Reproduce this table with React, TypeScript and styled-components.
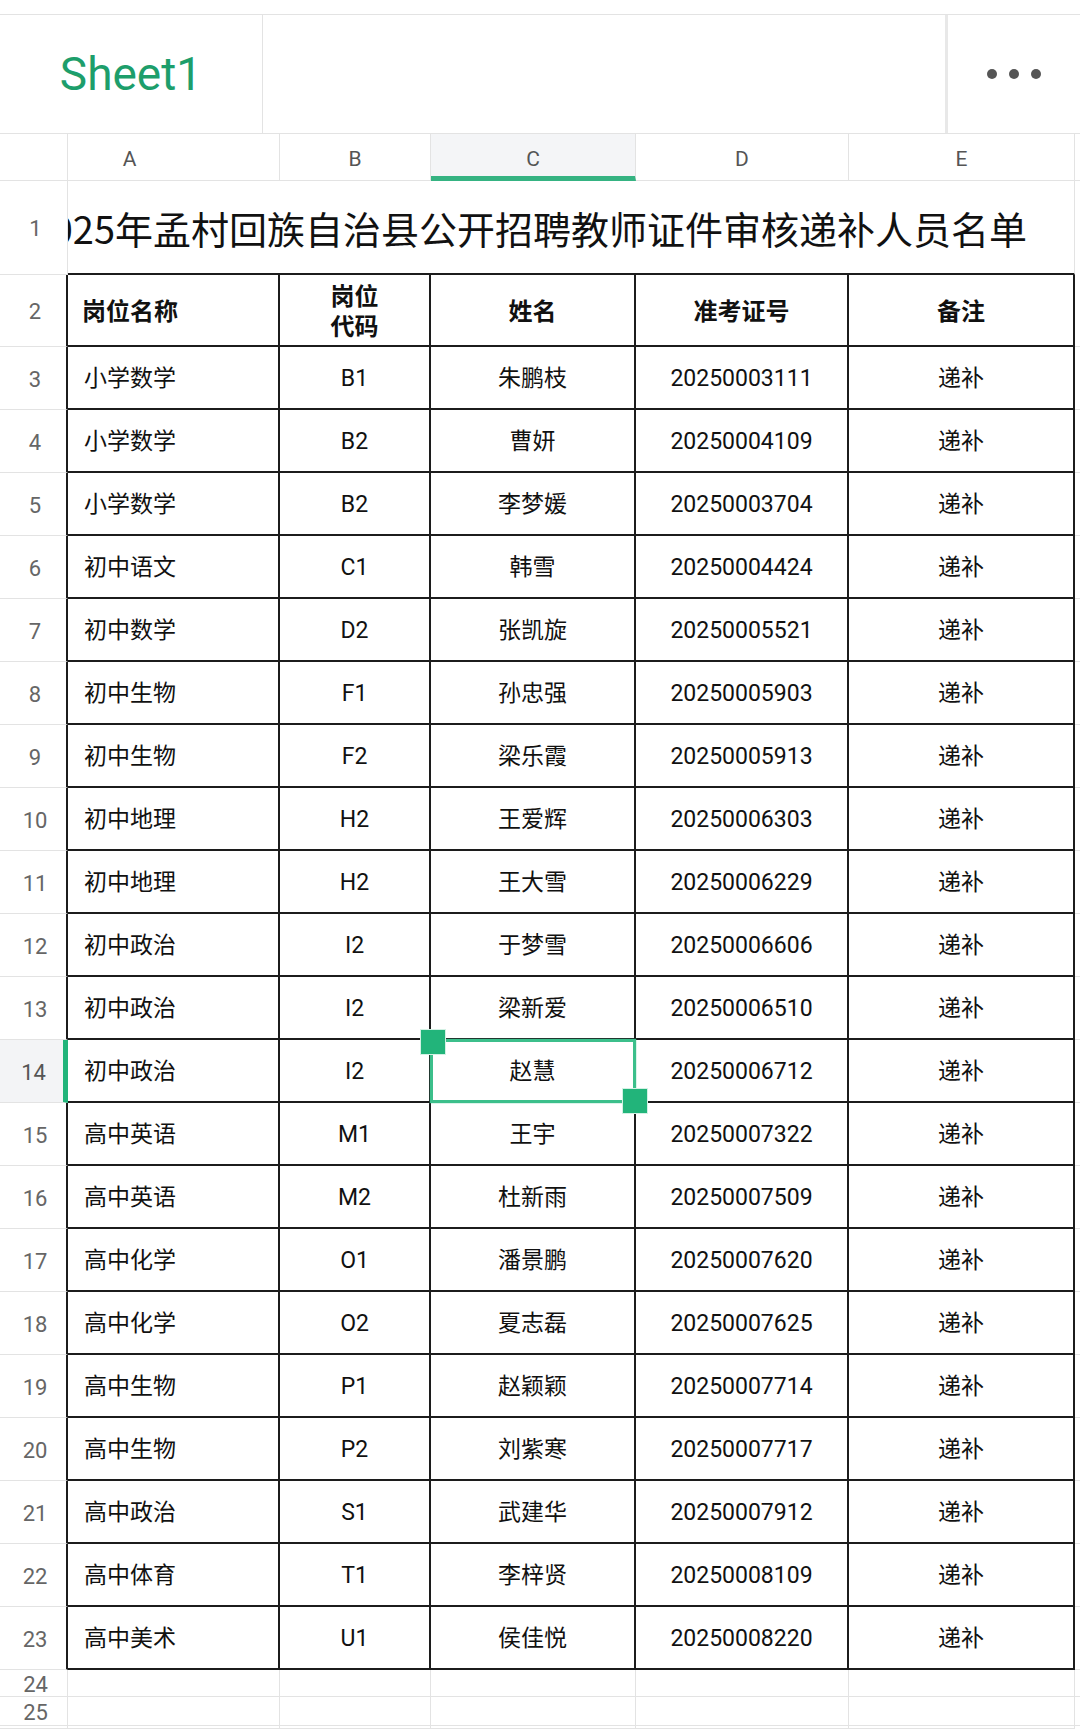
import React from "react";
import styled, { createGlobalStyle, css } from "styled-components";

const GREEN = "#22b47a";
const GRID = "#e3e3e3";
const INK = "#1c1c1c";

const GlobalStyle = createGlobalStyle`
  html, body { margin: 0; padding: 0; background: #fff; }
  body { font-family: Roboto, "Noto Sans CJK SC", sans-serif; overflow: hidden; }
  * { box-sizing: border-box; }
`;

const Page = styled.div`
  width: 1080px;
  height: 1729px;
  padding-top: 14px;
  display: flex;
  flex-direction: column;
  overflow: hidden;
  background: #fff;
`;

const TabBar = styled.div`
  flex: none;
  height: 120px;
  display: flex;
  border-top: 1px solid ${GRID};
  border-bottom: 1px solid ${GRID};
`;

const SheetTab = styled.div`
  width: 263px;
  display: flex;
  align-items: center;
  justify-content: center;
  border-right: 1px solid ${GRID};
  font-family: Roboto, sans-serif;
  font-size: 46px;
  color: #1d9e6b;
`;

const TabSpacer = styled.div`
  flex: 1;
`;

const MoreButton = styled.div`
  width: 135px;
  border-left: 3px solid #e8e8e8;
  display: flex;
  align-items: center;
  justify-content: center;
  gap: 12px;
`;

const Dot = styled.span`
  width: 10px;
  height: 10px;
  border-radius: 50%;
  background: #555;
`;

const Sheet = styled.div`
  flex: 1;
  display: grid;
  grid-template-columns: 68px 212px 151px 205px 213px 226px 5px;
  grid-template-rows: 47px 94px 72px repeat(21, 63px) 27px 29px 1fr;
`;

const Corner = styled.div`
  border-right: 1px solid ${GRID};
  border-bottom: 1px solid ${GRID};
`;

const ColHeader = styled.div<{ $active?: boolean; $shift?: number }>`
  display: flex;
  align-items: center;
  justify-content: center;
  padding-top: 3px;
  padding-right: ${(p) => p.$shift ?? 0}px;
  border-right: 1px solid ${GRID};
  border-bottom: 1px solid ${GRID};
  font-size: 21px;
  color: #555;
  ${(p) =>
    p.$active &&
    css`
      background: #f4f5f7;
      border-bottom: 5px solid #35b382;
      padding-top: 7px;
    `}
`;

type Edge = "grid" | "table" | "active";

const RowNum = styled.div<{ $edge: Edge }>`
  display: flex;
  align-items: center;
  justify-content: center;
  padding-left: 4px;
  padding-top: 2px;
  font-size: 22px;
  color: #666;
  border-bottom: 1px solid ${GRID};
  border-right: ${(p) =>
    p.$edge === "grid"
      ? `1px solid ${GRID}`
      : p.$edge === "table"
      ? `2px solid ${INK}`
      : `5px solid ${GREEN}`};
  ${(p) =>
    p.$edge === "active" &&
    css`
      background: #f3f4f6;
      color: #555;
    `}
`;

const TitleCell = styled.div`
  grid-column: span 5;
  display: flex;
  align-items: center;
  justify-content: flex-end;
  padding-right: 47px;
  overflow: hidden;
  border-right: 1px solid ${GRID};
  border-bottom: 2px solid ${INK};
`;

const Title = styled.span`
  flex: none;
  white-space: nowrap;
  font-family: "Noto Sans CJK SC", sans-serif;
  font-size: 38px;
  color: #111;
`;

const Cell = styled.div<{ $left?: boolean; $head?: boolean; $selected?: boolean }>`
  display: flex;
  flex-direction: column;
  align-items: ${(p) => (p.$left ? "flex-start" : "center")};
  justify-content: center;
  padding-left: ${(p) => (p.$left ? (p.$head ? "14px" : "16px") : "0")};
  padding-top: 3px;
  border-right: 2px solid ${INK};
  border-bottom: 2px solid ${INK};
  font-size: ${(p) => (p.$head ? "24px" : "23px")};
  font-weight: ${(p) => (p.$head ? 700 : 400)};
  line-height: 30px;
  color: #111;
  text-align: center;
  ${(p) =>
    p.$selected &&
    css`
      position: relative;
      z-index: 2;
    `}
`;

const Filler = styled.div<{ $bottom?: boolean }>`
  border-bottom: ${(p) => (p.$bottom ? `1px solid ${GRID}` : "none")};
`;

const EmptyCell = styled.div`
  border-right: 1px solid ${GRID};
  border-bottom: 1px solid ${GRID};
`;

const Selection = styled.div`
  position: absolute;
  left: -1px;
  top: -1px;
  right: -2px;
  bottom: -2px;
  border: 3px solid #3cbf8b;
  box-shadow: 0 0 0 1px rgba(60, 191, 139, 0.18);
  pointer-events: none;
`;

const Handle = styled.span<{ $pos: "tl" | "br" }>`
  position: absolute;
  width: 24px;
  height: 24px;
  background: ${GREEN};
  box-shadow: 0 0 0 1px #d3f1e4;
  ${(p) =>
    p.$pos === "tl"
      ? css`
          left: -12px;
          top: -12px;
        `
      : css`
          right: -14px;
          bottom: -13px;
        `}
`;

type Row = [string, string, string, string];

const data: Row[] = [
  ["小学数学", "B1", "朱鹏枝", "20250003111"],
  ["小学数学", "B2", "曹妍", "20250004109"],
  ["小学数学", "B2", "李梦媛", "20250003704"],
  ["初中语文", "C1", "韩雪", "20250004424"],
  ["初中数学", "D2", "张凯旋", "20250005521"],
  ["初中生物", "F1", "孙忠强", "20250005903"],
  ["初中生物", "F2", "梁乐霞", "20250005913"],
  ["初中地理", "H2", "王爱辉", "20250006303"],
  ["初中地理", "H2", "王大雪", "20250006229"],
  ["初中政治", "I2", "于梦雪", "20250006606"],
  ["初中政治", "I2", "梁新爱", "20250006510"],
  ["初中政治", "I2", "赵慧", "20250006712"],
  ["高中英语", "M1", "王宇", "20250007322"],
  ["高中英语", "M2", "杜新雨", "20250007509"],
  ["高中化学", "O1", "潘景鹏", "20250007620"],
  ["高中化学", "O2", "夏志磊", "20250007625"],
  ["高中生物", "P1", "赵颖颖", "20250007714"],
  ["高中生物", "P2", "刘紫寒", "20250007717"],
  ["高中政治", "S1", "武建华", "20250007912"],
  ["高中体育", "T1", "李梓贤", "20250008109"],
  ["高中美术", "U1", "侯佳悦", "20250008220"],
];

const SELECTED_ROW = 14;

export default function App() {
  return (
    <>
      <GlobalStyle />
      <Page>
        <TabBar>
          <SheetTab>Sheet1</SheetTab>
          <TabSpacer />
          <MoreButton>
            <Dot />
            <Dot />
            <Dot />
          </MoreButton>
        </TabBar>
        <Sheet>
          <Corner />
          {["A", "B", "C", "D", "E"].map((l) => (
            <ColHeader key={l} $active={l === "C"} $shift={l === "A" ? 88 : 0}>
              {l}
            </ColHeader>
          ))}
          <Filler $bottom />

          <RowNum $edge="grid">1</RowNum>
          <TitleCell>
            <Title>2025年孟村回族自治县公开招聘教师证件审核递补人员名单</Title>
          </TitleCell>
          <Filler />

          <RowNum $edge="table">2</RowNum>
          <Cell $left $head>岗位名称</Cell>
          <Cell $head>
            <span>岗位</span>
            <span>代码</span>
          </Cell>
          <Cell $head>姓名</Cell>
          <Cell $head>准考证号</Cell>
          <Cell $head>备注</Cell>
          <Filler $bottom />

          {data.map((r, i) => {
            const n = i + 3;
            const active = n === SELECTED_ROW;
            return (
              <React.Fragment key={n}>
                <RowNum $edge={active ? "active" : "table"}>{n}</RowNum>
                <Cell $left>{r[0]}</Cell>
                <Cell>{r[1]}</Cell>
                <Cell $selected={active}>
                  {r[2]}
                  {active && (
                    <Selection>
                      <Handle $pos="tl" />
                      <Handle $pos="br" />
                    </Selection>
                  )}
                </Cell>
                <Cell>{r[3]}</Cell>
                <Cell>递补</Cell>
                <Filler $bottom />
              </React.Fragment>
            );
          })}

          {[24, 25].map((n) => (
            <React.Fragment key={n}>
              <RowNum $edge="grid">{n}</RowNum>
              <EmptyCell />
              <EmptyCell />
              <EmptyCell />
              <EmptyCell />
              <EmptyCell />
              <Filler $bottom />
            </React.Fragment>
          ))}
          <Corner />
          <EmptyCell />
          <EmptyCell />
          <EmptyCell />
          <EmptyCell />
          <EmptyCell />
          <Filler />
        </Sheet>
      </Page>
    </>
  );
}
